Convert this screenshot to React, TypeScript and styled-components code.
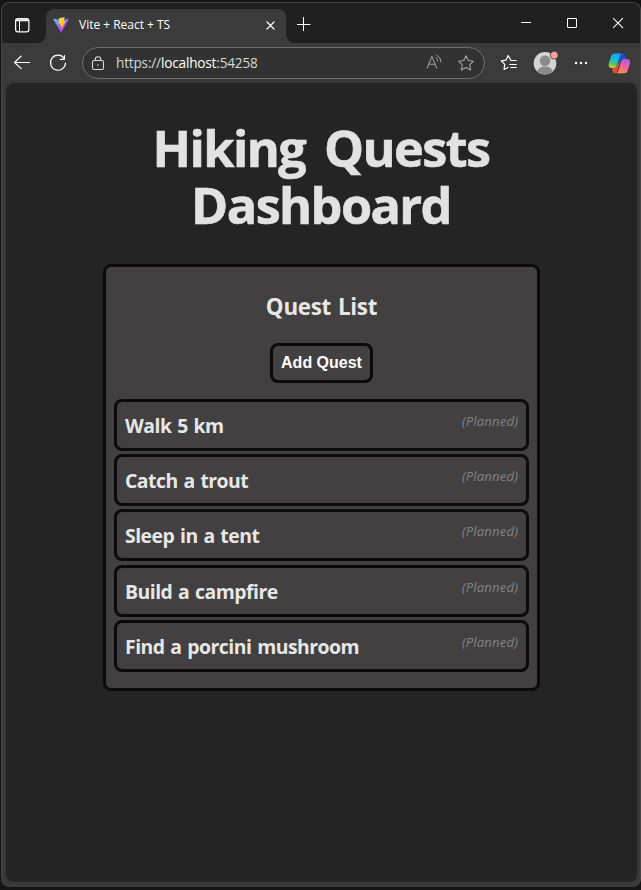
import React from "react";
import styled, { createGlobalStyle } from "styled-components";

const GlobalStyle = createGlobalStyle`
  *, *::before, *::after { box-sizing: border-box; }
  body { margin: 0; background: #141313; overflow: hidden; }
  h1, h2, p, ul { margin: 0; padding: 0; }
  svg { display: block; flex: none; }
`;

const ui = `"Segoe UI", "Open Sans", "Noto Sans", sans-serif`;

const Desktop = styled.div`
  width: 641px;
  height: 890px;
  padding: 2px 0 3px 1px;
  background: #141313;
`;

const Window = styled.div`
  display: flex;
  flex-direction: column;
  width: 640px;
  height: 885px;
  border: 1px solid #454545;
  border-bottom-color: #3b3b3b;
  border-radius: 8px;
  background: #3b3b3b;
  overflow: hidden;
  font-family: ${ui};
`;

const TitleBar = styled.header`
  display: flex;
  flex: none;
  height: 40px;
  background: #202020;
`;

const WorkspaceButton = styled.div`
  width: 44px;
  padding: 15px 0 0 13px;
`;

const Tab = styled.div`
  position: relative;
  display: flex;
  align-items: center;
  width: 240px;
  height: 34px;
  margin-top: 6px;
  padding: 0 10px 3px 7px;
  border-radius: 8px 8px 0 0;
  background: #3b3b3b;

  &::before, &::after {
    content: "";
    position: absolute;
    bottom: 0;
    width: 8px;
    height: 8px;
  }
  &::before {
    left: -8px;
    background: radial-gradient(circle at 0 0, transparent 7.5px, #3b3b3b 8px);
  }
  &::after {
    right: -8px;
    background: radial-gradient(circle at 100% 0, transparent 7.5px, #3b3b3b 8px);
  }
`;

const TabTitle = styled.span`
  flex: 1;
  margin-left: 10px;
  color: #fff;
  font-size: 12px;
  line-height: 16px;
  letter-spacing: -0.02px;
  white-space: nowrap;
`;

const NewTab = styled.div`
  padding: 14px 0 0 11px;
`;

const WindowControls = styled.div`
  display: flex;
  gap: 35px;
  margin-left: auto;
  padding: 14px 15px 0 0;
`;

const Toolbar = styled.nav`
  display: flex;
  align-items: center;
  flex: none;
  height: 40px;
  padding-left: 11px;
`;

const AddressBar = styled.div`
  display: flex;
  align-items: center;
  width: 403px;
  height: 32px;
  margin-left: 15px;
  padding: 0 9px 0 8px;
  border: 1px solid #6f6f6f;
  border-radius: 16px;
  background: #323232;
`;

const Url = styled.span`
  flex: 1;
  margin-left: 11px;
  color: #d6d6d6;
  font-size: 13.6px;
  line-height: 20px;
  letter-spacing: -0.18px;
  white-space: nowrap;
`;

const Host = styled.span`
  color: #fff;
`;

const BarActions = styled.div`
  display: flex;
  gap: 14px;
`;

const ToolActions = styled.div`
  display: flex;
  align-items: center;
  margin-left: 15px;
`;

const Avatar = styled.div`
  margin: 0 0 0 15px;
`;

const More = styled.div`
  margin: 0 20px 0 15px;
`;

const Page = styled.main`
  width: 631px;
  height: 799px;
  margin-left: 4px;
  padding-top: 36px;
  border-radius: 8px;
  background: #242424;
  box-shadow: 0 0 3px #303030;
`;

const PageTitle = styled.h1`
  height: 114px;
  padding-right: 1px;
  color: #e2e2e2;
  font-size: 50.4px;
  font-weight: 700;
  line-height: 57px;
  letter-spacing: -1.6px;
  word-spacing: 7.5px;
  text-align: center;
  -webkit-text-stroke: 0.6px #e2e2e2;
`;

const Card = styled.section`
  display: flex;
  flex-direction: column;
  align-items: center;
  width: 437px;
  height: 427px;
  margin: 31px 0 0 97px;
  padding: 0 8px;
  border: 3px solid #0b0b0b;
  border-radius: 8px;
  background: #424040;
`;

const CardTitle = styled.h2`
  height: 32px;
  margin-top: 24px;
  color: #e7e7e7;
  font-size: 22.4px;
  font-weight: 700;
  line-height: 32px;
  letter-spacing: -0.3px;
  word-spacing: 1.5px;
`;

const AddButton = styled.button`
  width: 103px;
  height: 40px;
  margin-top: 20px;
  padding: 0;
  border: 3px solid #0b0b0b;
  border-radius: 8px;
  background: #424040;
  color: #fff;
  font: 700 16px/20px "Liberation Sans", Arial, sans-serif;
  white-space: nowrap;
`;

const QuestList = styled.ul`
  display: flex;
  flex-direction: column;
  gap: 3.22px;
  align-self: stretch;
  margin-top: 16px;
  list-style: none;
`;

const QuestRow = styled.li`
  display: flex;
  justify-content: space-between;
  height: 52px;
  padding: 8px 8px 0;
  border: 3px solid #0b0b0b;
  border-radius: 8px;
`;

const QuestName = styled.span`
  color: #e7e7e7;
  font-size: 19.4px;
  font-weight: 700;
  line-height: 31px;
  letter-spacing: -0.5px;
  word-spacing: 1.2px;
  white-space: nowrap;
`;

const QuestStatus = styled.em`
  color: #858484;
  font-size: 13.2px;
  line-height: 23px;
  letter-spacing: 0.1px;
`;

const quests = [
  "Walk 5 km",
  "Catch a trout",
  "Sleep in a tent",
  "Build a campfire",
  "Find a porcini mushroom",
];

const line = { fill: "none", stroke: "#fff", strokeLinecap: "round", strokeLinejoin: "round" } as const;

const WorkspaceIcon = () => (
  <svg width="15" height="15" viewBox="0 0 15 15" {...line}>
    <rect x=".6" y=".6" width="13.3" height="13.3" rx="2.4" strokeWidth="1.2" />
    <path d="M1.5 2.2h11.5" strokeWidth="2" />
    <path d="M4.5 3v10.5" strokeWidth="1" />
  </svg>
);

const ViteIcon = () => (
  <svg width="16" height="16" viewBox="0 0 410 404">
    <defs>
      <linearGradient id="viteBody" x1="6" y1="33" x2="235" y2="344" gradientUnits="userSpaceOnUse">
        <stop stopColor="#41D1FF" /><stop offset="1" stopColor="#BD34FE" />
      </linearGradient>
      <linearGradient id="viteBolt" x1="194.7" y1="8.8" x2="236" y2="293" gradientUnits="userSpaceOnUse">
        <stop stopColor="#FFEA83" /><stop offset=".083" stopColor="#FFDD35" /><stop offset="1" stopColor="#FFA800" />
      </linearGradient>
    </defs>
    <path fill="url(#viteBody)" d="M399.6 59.5 215.6 388.5c-3.8 6.8-13.5 6.8-17.4.1L10.6 59.6c-4.2-7.4 2.1-16.3 10.4-14.8l184.2 32.9c1.2.2 2.4.2 3.5 0l180.3-32.9c8.3-1.5 14.7 7.4 10.6 14.7Z" />
    <path fill="url(#viteBolt)" d="M293 1.6 156.8 28.3c-2.2.4-3.9 2.3-4 4.6l-8.4 141.5c-.2 3.3 2.9 5.9 6.1 5.2l37.9-8.8c3.6-.8 6.8 2.3 6 5.9l-11.2 55.1c-.8 3.7 2.7 6.9 6.3 5.8l23.4-7.1c3.6-1.1 7.1 2.1 6.4 5.8l-17.9 86.6c-1.1 5.4 6.1 8.4 9.1 3.8l2-3.1 110.9-221.4c1.9-3.7-1.3-7.9-5.4-7.2l-39 7.6c-3.7.7-6.8-2.7-5.8-6.3L298.7 8.3c1-3.6-2.1-7.1-5.7-6.7Z" />
  </svg>
);

const CloseTabIcon = () => (
  <svg width="12" height="12" viewBox="0 0 12 12" {...line}>
    <path d="m3 3 7 7m0-7-7 7" strokeWidth="1.2" />
  </svg>
);

const PlusIcon = () => (
  <svg width="14" height="14" viewBox="0 0 14 14" {...line} strokeLinecap="butt">
    <path d="M6.5 0v14M0 7.5h13.5" />
  </svg>
);

const MinimizeIcon = () => (
  <svg width="11" height="11" viewBox="0 0 11 11" {...line} strokeLinecap="butt"><path d="M0 5.5h10" /></svg>
);

const MaximizeIcon = () => (
  <svg width="11" height="11" viewBox="0 0 11 11" {...line}><rect x=".5" y="1.5" width="9" height="9" rx=".5" /></svg>
);

const CloseIcon = () => (
  <svg width="12" height="12" viewBox="0 0 12 12" {...line}><path d="m.3 1.3 9.4 9.4m0-9.4L.3 10.7" strokeWidth="1.1" /></svg>
);

const BackIcon = () => (
  <svg width="18" height="18" viewBox="0 0 18 18" {...line}>
    <path d="M16.5 8.5h-15M8.2 2 1.5 8.5l6.7 6.2" strokeWidth="1.1" />
  </svg>
);

const ReloadIcon = styled.svg.attrs({ viewBox: "0 0 18 18" })`
  width: 18px;
  height: 18px;
  margin-left: 18px;
  fill: none;
  stroke: #fff;
  stroke-width: 1.15;
  stroke-linecap: round;
  stroke-linejoin: round;
`;

const LockIcon = () => (
  <svg width="14" height="15" viewBox="0 0 14 15" {...line} stroke="#dadada" strokeWidth="1.1">
    <rect x="1.5" y="4.5" width="11" height="9" rx="1.8" />
    <path d="M4.2 4.5V3.6a2.8 2.8 0 0 1 5.6 0v.9" />
    <circle cx="7" cy="9" r=".8" fill="#dadada" stroke="none" />
  </svg>
);

const ReadAloudIcon = () => (
  <svg width="17" height="16" viewBox="0 0 17 16" {...line} stroke="#a5a5a5">
    <path d="M1.2 14 5.9 2.3 10.6 14M2.8 10.2H9" />
    <path d="M10 3.7c1 1 1.5 2 1.5 3.5M10.7 1.4c2.7 1.3 4.1 3.6 4.1 6.6" />
  </svg>
);

const StarIcon = () => (
  <svg width="18" height="18" viewBox="0 0 18 18" {...line} stroke="#a5a5a5">
    <path d="m9 1.8 2.3 4.7 5.1.7-3.7 3.6.9 5.2L9 13.5 4.4 16l.9-5.2-3.7-3.6 5.1-.7Z" strokeWidth="1.1" />
  </svg>
);

const FavoritesIcon = () => (
  <svg width="18" height="18" viewBox="0 0 18 18" {...line} strokeWidth="1.2">
    <path d="M10.5 5.5 8.2 1.6 6 6.1l-4.7.7 3.5 3.5-.8 5.2 3.8-2M10.8 6.5h5.5M9.8 10.5h6.5M10.8 13.5h5.5" />
  </svg>
);

const AvatarIcon = () => (
  <svg width="26" height="24" viewBox="0 0 26 24">
    <defs><clipPath id="avatarClip"><circle cx="12" cy="12.3" r="11" /></clipPath></defs>
    <circle cx="12" cy="12.3" r="11.3" fill="#d5d3d1" />
    <g fill="#8d8986" clipPath="url(#avatarClip)"><circle cx="12" cy="9.7" r="5.3" /><ellipse cx="12" cy="20.5" rx="7.5" ry="5" /></g>
    <circle cx="21.2" cy="4.2" r="3.9" fill="#ffa29e" stroke="#3b3b3b" strokeWidth=".8" />
  </svg>
);

const DotsIcon = () => (
  <svg width="14" height="4" viewBox="0 0 14 4" fill="#fff"><circle cx="2" cy="2" r="1.2" /><circle cx="7" cy="2" r="1.2" /><circle cx="12" cy="2" r="1.2" /></svg>
);

const CopilotIcon = () => (
  <svg width="23" height="21" viewBox="0 0 23 21">
    <defs>
      <linearGradient id="copilotCool" x1="8" y1="0" x2="5" y2="16" gradientUnits="userSpaceOnUse">
        <stop stopColor="#199fff" /><stop offset=".4" stopColor="#14bbdb" /><stop offset=".7" stopColor="#5cc55a" /><stop offset="1" stopColor="#f0cd20" />
      </linearGradient>
      <linearGradient id="copilotWarm" x1="19" y1="5" x2="12" y2="21" gradientUnits="userSpaceOnUse">
        <stop stopColor="#a956ed" /><stop offset=".5" stopColor="#ef609c" /><stop offset="1" stopColor="#ff943e" />
      </linearGradient>
    </defs>
    <path fill="#1753c4" d="M11 .5h3.7c1.6 0 2.2 1 2.7 2.6l.9 2.9h-3c-2 0-2.6 1.2-3.1 3L10 13l-2-1Z" />
    <path fill="#f1453f" d="m12.5 8-3 9.5c-.6 2-1.4 3-3 2.7-1.3-.2-1.6-1.5-2.1-3.2L4 15h2.3c1.8 0 2.5-1 3-2.7Z" />
    <path fill="url(#copilotCool)" d="M7 .5h7c-1.5.3-2 1.5-2.5 3.2L9 12c-.6 2-1.2 3-3.3 3H3.5C.8 15 .2 12.5.9 10L3 3.6C3.7 1.4 5 .5 7 .5Z" />
    <path fill="url(#copilotWarm)" d="M16 20.3H7.5c1.7 0 2.5-1.4 3-3.1L13 9c.6-2 1.2-3 3.3-3h2.8c2.6 0 3.5 2.2 2.8 4.5L20 17c-.7 2.3-2 3.3-4 3.3Z" />
  </svg>
);

export default function App() {
  return (
    <Desktop>
      <GlobalStyle />
      <Window>
        <TitleBar>
          <WorkspaceButton><WorkspaceIcon /></WorkspaceButton>
          <Tab>
            <ViteIcon />
            <TabTitle>Vite + React + TS</TabTitle>
            <CloseTabIcon />
          </Tab>
          <NewTab><PlusIcon /></NewTab>
          <WindowControls>
            <MinimizeIcon />
            <MaximizeIcon />
            <CloseIcon />
          </WindowControls>
        </TitleBar>
        <Toolbar>
          <BackIcon />
          <ReloadIcon><path d="M15.1 4.3A7.5 7.5 0 1 0 16.5 9M15.5 1.6v3.7h-4.2" /></ReloadIcon>
          <AddressBar>
            <LockIcon />
            <Url>https://<Host>localhost</Host>:54258</Url>
            <BarActions><ReadAloudIcon /><StarIcon /></BarActions>
          </AddressBar>
          <ToolActions>
            <FavoritesIcon />
            <Avatar><AvatarIcon /></Avatar>
            <More><DotsIcon /></More>
            <CopilotIcon />
          </ToolActions>
        </Toolbar>
        <Page>
          <PageTitle>Hiking Quests<br />Dashboard</PageTitle>
          <Card>
            <CardTitle>Quest List</CardTitle>
            <AddButton>Add Quest</AddButton>
            <QuestList>
              {quests.map((name) => (
                <QuestRow key={name}>
                  <QuestName>{name}</QuestName>
                  <QuestStatus>(Planned)</QuestStatus>
                </QuestRow>
              ))}
            </QuestList>
          </Card>
        </Page>
      </Window>
    </Desktop>
  );
}
